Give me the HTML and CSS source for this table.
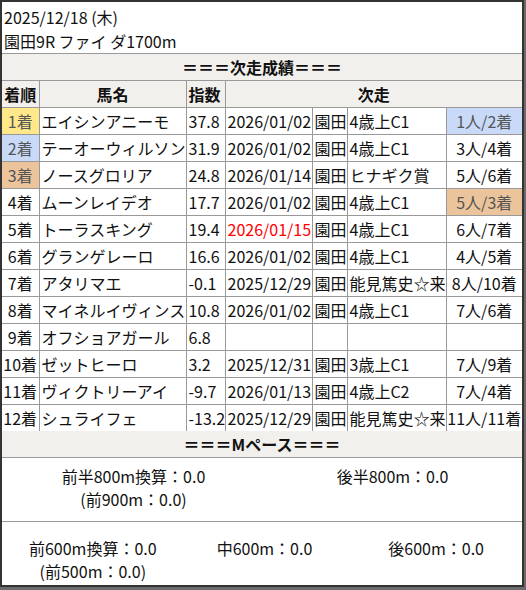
FILE: index.html
```html
<!DOCTYPE html>
<html lang="ja">
<head>
<meta charset="utf-8">
<link rel="stylesheet" href="styles.css">
</head>
<body>
<div class="card">
  <div class="head">
    <div>2025/12/18 (木)</div>
    <div>園田9R ファイ ダ1700m</div>
  </div>
  <div class="bar bar-top">＝＝＝次走成績＝＝＝</div>
  <table class="res">
    <colgroup>
      <col class="w1"><col class="w2"><col class="w3"><col class="w4"><col class="w5"><col class="w6"><col class="w7">
    </colgroup>
    <thead>
      <tr><th class="c">着順</th><th class="c">馬名</th><th class="l">指数</th><th class="c" colspan="4">次走</th></tr>
    </thead>
    <tbody>
      <tr><td class="c rk gold">1着</td><td>エイシンアニーモ</td><td>37.8</td><td>2026/01/02</td><td>園田</td><td>4歳上C1</td><td class="c silver">1人/2着</td></tr>
      <tr><td class="c rk silver">2着</td><td>テーオーウィルソン</td><td>31.9</td><td>2026/01/02</td><td>園田</td><td>4歳上C1</td><td class="c">3人/4着</td></tr>
      <tr><td class="c rk bronze">3着</td><td>ノースグロリア</td><td>24.8</td><td>2026/01/14</td><td>園田</td><td>ヒナギク賞</td><td class="c">5人/6着</td></tr>
      <tr><td class="c">4着</td><td>ムーンレイデオ</td><td>17.7</td><td>2026/01/02</td><td>園田</td><td>4歳上C1</td><td class="c bronze">5人/3着</td></tr>
      <tr><td class="c">5着</td><td>トーラスキング</td><td>19.4</td><td class="red">2026/01/15</td><td>園田</td><td>4歳上C1</td><td class="c">6人/7着</td></tr>
      <tr><td class="c">6着</td><td>グランゲレーロ</td><td>16.6</td><td>2026/01/02</td><td>園田</td><td>4歳上C1</td><td class="c">4人/5着</td></tr>
      <tr><td class="c">7着</td><td>アタリマエ</td><td>-0.1</td><td>2025/12/29</td><td>園田</td><td>能見篤史☆来</td><td class="c">8人/10着</td></tr>
      <tr><td class="c">8着</td><td>マイネルイヴィンス</td><td>10.8</td><td>2026/01/02</td><td>園田</td><td>4歳上C1</td><td class="c">7人/6着</td></tr>
      <tr><td class="c">9着</td><td>オフショアガール</td><td>6.8</td><td></td><td></td><td></td><td></td></tr>
      <tr><td class="c">10着</td><td>ゼットヒーロ</td><td>3.2</td><td>2025/12/31</td><td>園田</td><td>3歳上C1</td><td class="c">7人/9着</td></tr>
      <tr><td class="c">11着</td><td>ヴィクトリーアイ</td><td>-9.7</td><td>2026/01/13</td><td>園田</td><td>4歳上C2</td><td class="c">7人/4着</td></tr>
      <tr><td class="c">12着</td><td>シュライフェ</td><td>-13.2</td><td>2025/12/29</td><td>園田</td><td>能見篤史☆来</td><td class="c">11人/11着</td></tr>
    </tbody>
  </table>
  <div class="bar bar-bottom">＝＝＝Mペース＝＝＝</div>
  <div class="pace pace-two">
    <div><div>前半800m換算：0.0</div><div>(前900m：0.0)</div></div>
    <div><div>後半800m：0.0</div></div>
  </div>
  <div class="pace pace-three">
    <div><div>前600m換算：0.0</div><div>(前500m：0.0)</div></div>
    <div><div>中600m：0.0</div></div>
    <div><div>後600m：0.0</div></div>
  </div>
</div>
</body>
</html>
```

FILE: styles.css
```css
html, body {
  margin: 0;
  padding: 0;
  background: #6b6b6b;
}
body {
  font-family: "Noto Sans CJK JP", "Noto Sans", sans-serif;
  font-size: 16px;
  color: #111;
  width: 526px;
  height: 590px;
  overflow: hidden;
}
.card {
  width: 520px;
  border: 2px solid #333;
  background: #fff;
}
.head {
  padding: 3px 0 0 2px;
  line-height: 24px;
}
.bar {
  background: #f2f0ec;
  font-weight: bold;
  text-align: center;
  height: 26px;
  line-height: 26px;
}
.bar-top {
  border-top: 1px solid #999;
}
.bar-bottom {
  border-bottom: 1px solid #999;
}
.res {
  width: 520px;
  border-collapse: collapse;
  table-layout: fixed;
  border-style: hidden;
  border-top: 1px solid #999;
}
.res col.w1 { width: 37px; }
.res col.w2 { width: 147px; }
.res col.w3 { width: 39px; }
.res col.w4 { width: 87px; }
.res col.w5 { width: 35px; }
.res col.w6 { width: 99px; }
.res col.w7 { width: 76px; }
.res th, .res td {
  border: 1px solid #999;
  height: 26px;
  padding: 0 0 0 2px;
  line-height: 26px;
  white-space: nowrap;
  overflow: hidden;
  text-align: left;
  font-weight: normal;
}
.res th {
  background: #f2f0ec;
  font-weight: bold;
}
.res th.l { text-align: left; }
.res .c { text-align: center; padding: 0; }
.gold { background: #ffe88a; color: #555; }
.silver { background: #c9daf8; color: #555; }
.bronze { background: #ebc49c; color: #555; }
.red { color: #ff0000; }
.pace {
  display: grid;
  text-align: center;
  line-height: 23px;
}
.pace-two {
  grid-template-columns: 1fr 1fr;
  padding: 7px 0 10px 2px;
  border-bottom: 1px solid #999;
}
.pace-three {
  grid-template-columns: 1fr 1fr 1fr;
  padding: 15px 0 2px 5px;
}
```
